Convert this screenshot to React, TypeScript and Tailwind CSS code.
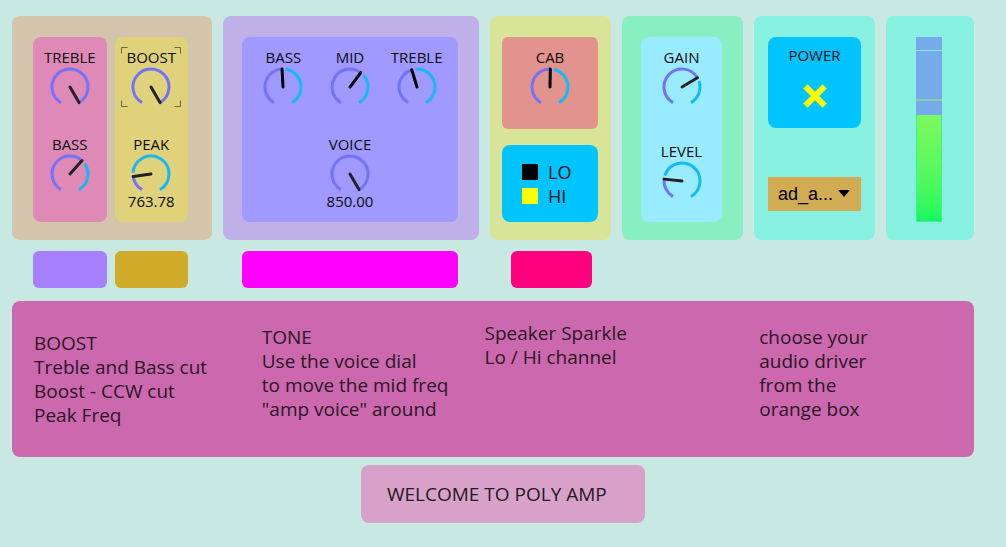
import { useState, type ReactNode } from "react";

const SWEEP = 150;
const RADIUS = 18;

function point(deg: number, r: number) {
  const a = (deg * Math.PI) / 180;
  return `${(20 + r * Math.sin(a)).toFixed(2)} ${(20 - r * Math.cos(a)).toFixed(2)}`;
}

function arc(from: number, to: number) {
  const large = to - from > 180 ? 1 : 0;
  return `M${point(from, RADIUS)} A${RADIUS} ${RADIUS} 0 ${large} 1 ${point(to, RADIUS)}`;
}

type KnobProps = {
  label: string;
  start: number;
  needle?: string;
  readout?: string;
  focused?: boolean;
};

/* Rotary control: the range input lies invisibly over the drawn dial. */
function Knob({ label, start, needle = "#222222", readout, focused }: KnobProps) {
  const [angle, setAngle] = useState(start);
  return (
    <div className="flex flex-col items-center">
      <label className="relative flex size-15 flex-col items-center">
        <span className="text-[15px] leading-5 whitespace-nowrap">{label}</span>
        <svg viewBox="0 0 40 40" className="size-10 shrink-0" fill="none" aria-hidden="true">
          <path d={arc(-SWEEP, Math.min(angle, SWEEP - 2))} stroke="#7373f8" strokeWidth="3" />
          {angle + 12 < SWEEP && <path d={arc(angle + 12, SWEEP)} stroke="#16b9f6" strokeWidth="3" />}
          <path d={`M20 20 L${point(angle, 18)}`} stroke={needle} strokeWidth="3" strokeLinecap="round" />
        </svg>
        <input
          type="range"
          min={-SWEEP}
          max={SWEEP}
          value={angle}
          onChange={(e) => setAngle(Number(e.target.value))}
          className="absolute inset-0 m-0 size-full cursor-pointer opacity-0"
        />
        {focused && (
          <svg viewBox="0 0 60 60" className="pointer-events-none absolute inset-0 size-15" fill="none" stroke="#6e6738" aria-hidden="true">
            <path d="M.5 6.5V.5H6.5M53.5 .5H59.5V6.5M59.5 53.5V59.5H53.5M6.5 59.5H.5V53.5" />
          </svg>
        )}
      </label>
      {readout && <output className="text-[15px] leading-[14px]">{readout}</output>}
    </div>
  );
}

function Panel({ className, children }: { className: string; children?: ReactNode }) {
  return <section className={`rounded-lg pt-[21px] pb-[18px] ${className}`}>{children}</section>;
}

const columns =
  "grid grid-cols-[minmax(0,200fr)_minmax(0,256fr)_minmax(0,121fr)_minmax(0,121fr)_minmax(0,121fr)_minmax(0,88fr)] gap-x-[11px]";

function Swatch({ name, className }: { name: string; className: string }) {
  return <button type="button" aria-label={name} className={`block h-[37px] w-full rounded-md ${className}`} />;
}

export default function App() {
  const [channel, setChannel] = useState("HI");
  const [power, setPower] = useState(true);

  return (
    <main className="min-h-screen bg-[#c8e8e2] pt-4 pb-6 font-['Open_Sans','Noto_Sans',sans-serif] text-[#0d0d0d]">
      <div className="pr-8 pl-3">
        <div className={columns}>
          <Panel className="grid grid-cols-2 gap-2 bg-[#d3c4ab] pr-6 pl-[21px]">
            <div className="flex flex-col gap-[27px] rounded-lg bg-[#df8ab6] py-2.5">
              <Knob label="TREBLE" start={150} />
              <Knob label="BASS" start={42} />
            </div>
            <div className="flex flex-col gap-[27px] rounded-lg bg-[#dfd27a] pt-2.5 pb-3.5">
              <Knob label="BOOST" start={150} focused />
              <Knob label="PEAK" start={-98} readout="763.78" />
            </div>
          </Panel>

          <Panel className="flex flex-col bg-[#bfb0e7] pr-[21px] pl-[19px]">
            <div className="grid grow grid-cols-3 content-start gap-y-[27px] rounded-lg bg-[#a099ff] px-2 pt-2.5">
              <Knob label="BASS" start={-3} needle="#000000" />
              <Knob label="MID" start={37} needle="#000000" />
              <Knob label="TREBLE" start={-17} needle="#000000" />
              <div className="col-start-2">
                <Knob label="VOICE" start={150} readout="850.00" />
              </div>
            </div>
          </Panel>

          <Panel className="flex flex-col gap-4 bg-[#d8e598] pr-[13px] pl-3">
            <div className="rounded-md bg-[#e3938e] pt-2.5 pb-[22px]">
              <Knob label="CAB" start={1} needle="#000000" />
            </div>
            <fieldset className="flex grow flex-col justify-center rounded-lg bg-[#00c4ff] pl-5">
              {["LO", "HI"].map((name) => (
                <label key={name} className="flex items-center gap-2.5 text-lg leading-6">
                  <input
                    type="radio"
                    name="channel"
                    checked={channel === name}
                    onChange={() => setChannel(name)}
                    className="size-4 appearance-none bg-black checked:bg-[#ffff00]"
                  />
                  {name}
                </label>
              ))}
            </fieldset>
          </Panel>

          <Panel className="flex flex-col bg-[#88efc0] pr-[21px] pl-[19px]">
            <div className="flex grow flex-col gap-[34px] rounded-lg bg-[#99ebff] pt-2.5">
              <Knob label="GAIN" start={59} />
              <Knob label="LEVEL" start={-84} />
            </div>
          </Panel>

          <Panel className="flex flex-col gap-[49px] bg-[#87f0e0] pr-[14px] pl-[14px]">
            <label className="relative flex flex-col items-center gap-[19px] rounded-lg bg-[#00c4ff] pt-2 pb-5">
              <span className="text-[15px] leading-5">POWER</span>
              <svg viewBox="0 0 24 24" className="size-6" stroke="#ffff00" strokeWidth="6" aria-hidden="true">
                {power && <path d="M2.4 2.4L21.6 21.6M21.6 2.4L2.4 21.6" />}
              </svg>
              <input
                type="checkbox"
                checked={power}
                onChange={(e) => setPower(e.target.checked)}
                className="absolute inset-0 size-full cursor-pointer opacity-0"
              />
            </label>
            <div className="relative">
              <select
                aria-label="Audio driver"
                className="h-[34px] w-full appearance-none bg-[#d1ac52] pl-2.5 font-['Liberation_Sans',sans-serif] text-lg leading-6 text-black"
              >
                <option>ad_a...</option>
              </select>
              <svg viewBox="0 0 12 7" className="pointer-events-none absolute top-[13px] right-[11px] h-[7px] w-3" aria-hidden="true">
                <path d="M0 0H12L6 7Z" />
              </svg>
            </div>
          </Panel>

          <Panel className="flex flex-col bg-[#87f0e0] pr-8 pl-[30px]">
            <div
              role="meter"
              aria-label="Output level"
              aria-valuemin={0}
              aria-valuemax={100}
              aria-valuenow={58}
              className="flex grow flex-col bg-[#75aaeb]"
            >
              <div className="h-[13px]" />
              <div className="h-px bg-[#8fe3e6]" />
              <div className="h-12" />
              <div className="h-0.5 bg-[#88cfa0]" />
              <div className="h-3.5" />
              <div className="grow border-x border-b border-[#4be79a] bg-linear-to-b from-[#7cf95e] to-[#10f95e]" />
            </div>
          </Panel>
        </div>

        <div className={`${columns} mt-[11px]`}>
          <div className="grid grid-cols-2 gap-2 pr-6 pl-[21px]">
            <Swatch name="Cut" className="bg-[#a680ff]" />
            <Swatch name="Boost" className="bg-[#d0ab29]" />
          </div>
          <div className="pr-[21px] pl-[19px]">
            <Swatch name="Tone" className="bg-[#ff00ff]" />
          </div>
          <div className="pr-[19px] pl-[21px]">
            <Swatch name="Cab" className="bg-[#ff007f]" />
          </div>
        </div>

        <section className="mt-[13px] grid grid-cols-[228fr_223fr_275fr_215fr] rounded-lg bg-[#cc68ad] pb-[30px] pl-[22px] text-[19px] leading-6 text-[#2b1626]">
          <p className="pt-[30px]">
            BOOST
            <br />
            Treble and Bass cut
            <br />
            Boost - CCW cut
            <br />
            Peak Freq
          </p>
          <p className="pt-6">
            TONE
            <br />
            Use the voice dial
            <br />
            to move the mid freq
            <br />
            "amp voice" around
          </p>
          <p className="pt-5">
            Speaker Sparkle
            <br />
            Lo / Hi channel
          </p>
          <p className="pt-6">
            choose your
            <br />
            audio driver
            <br />
            from the
            <br />
            orange box
          </p>
        </section>
      </div>

      <h1 className="mx-auto mt-2 w-[284px] rounded-lg bg-[#d8a1ca] py-[17px] pl-[26px] text-[19px] leading-6 text-[#241a22]">
        WELCOME TO POLY AMP
      </h1>
    </main>
  );
}
